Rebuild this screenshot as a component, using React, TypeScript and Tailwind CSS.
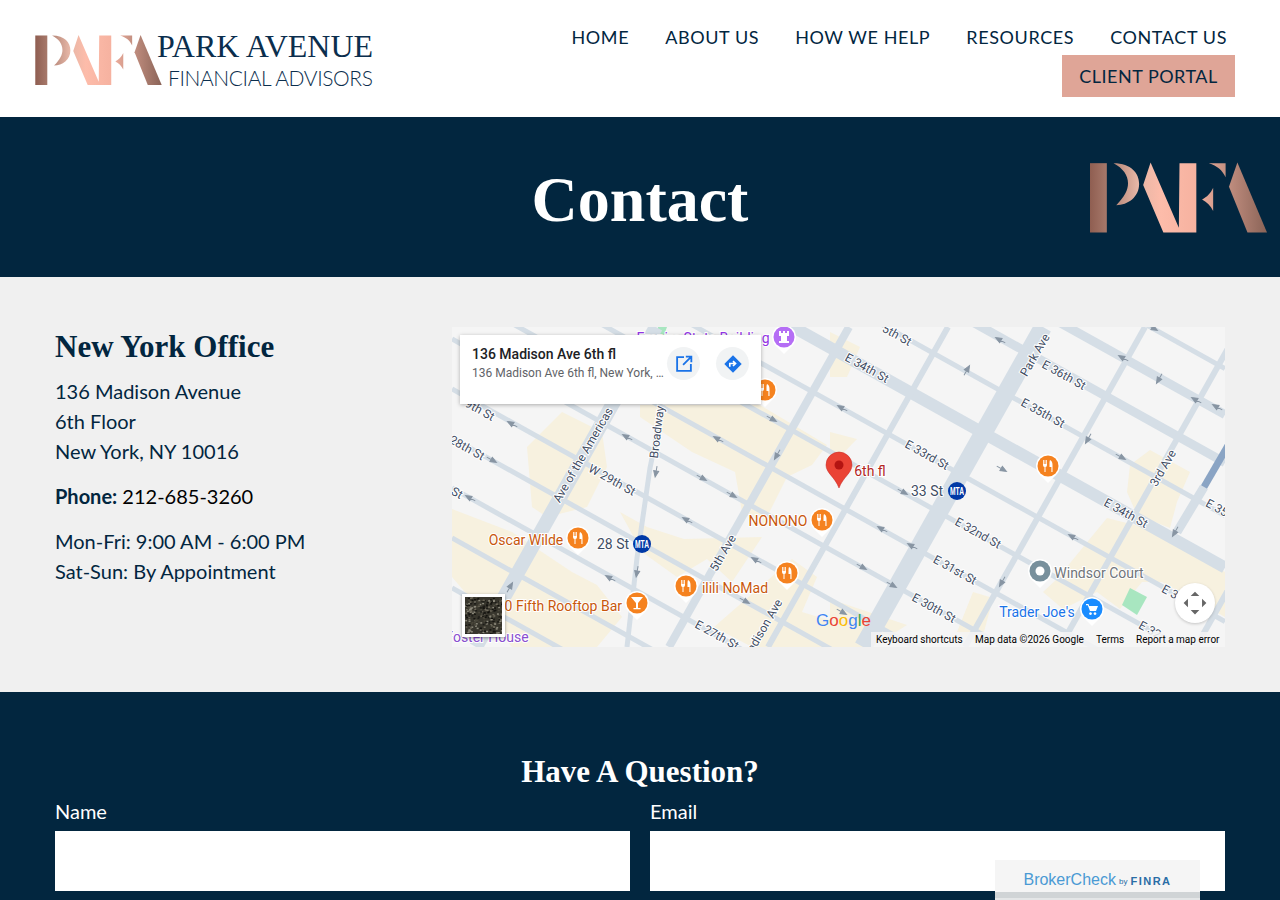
const navLinks = ["Home", "About Us", "How We Help", "Resources", "Contact Us"];

// streets: y where the line crosses x=0, and width
const streets = [
  [-389, 5], [-343, 9], [-295, 9], [-242, 5], [-190, 12], [-136, 5], [-86, 5],
  [-37, 5], [12, 5], [62, 5], [111, 5], [161, 5], [211, 5], [261, 5],
];
// avenues: x where the line crosses y=0, and width
const avenues = [[204, 14], [397, 8], [496, 6], [591, 18], [693, 6], [788, 6], [924, 6]];

const buildings = [
  "188,78 308,78 375,118 360,138 335,150 310,200 290,185 283,145 240,125 188,90",
  "75,120 110,85 150,105 155,140 135,180 95,190 80,180",
  "0,182 60,205 120,245 145,258 170,290 145,320 60,320 0,250",
  "168,185 195,200 232,212 310,210 280,255 255,232 225,250 190,225",
  "340,232 365,250 350,285 400,300 380,320 300,320 262,300",
  "378,105 405,112 378,140",
  "378,272 455,298 420,320 378,320",
  "521,265 541,271 528,320 505,305",
  "655,191 710,205 773,245 773,290 710,255 690,255 668,282 645,265 611,282 591,265 605,252",
  "678,138 698,123 738,145 725,175 718,201 685,188 675,165",
  "378,5 408,20 395,50 378,50",
];

const roadLabels: [string, number, number, number][] = [
  ["E 34th St", 415, 41, 29],
  ["E 36th St", 612, 48, 29],
  ["E 35th St", 591, 86, 29],
  ["E 33rd St", 475, 128, 29],
  ["E 32nd St", 526, 206, 29],
  ["E 31st St", 503, 243, 29],
  ["E 30th St", 482, 281, 29],
  ["E 34th St", 674, 186, 29],
  ["Park Ave", 583, 28, -60],
  ["3rd Ave", 711, 141, -60],
  ["E 35", 765, 181, 29],
  ["E 3", 718, 265, 29],
  ["E 32", 698, 303, 29],
  ["5th St", 445, 8, 29],
  ["Ave of the Americas", 131, 128, -60],
  ["Broadway", 205, 105, -83],
  ["W 29th St", 160, 153, 29],
  ["9th St", 28, 83, 29],
  ["28th St", 15, 121, 29],
  ["St", 5, 166, 29],
  ["5th Ave", 271, 226, -60],
  ["E 27th St", 265, 308, 29],
  ["Madison Ave", 310, 303, -60],
];

const arrows: [number, number, number][] = [
  [175, 110, 209], [250, 151, 29], [280, 168, 29], [235, 193, 209], [293, 274, 29], [158, 251, 209],
  [18, 171, 209], [40, 133, 29], [60, 97, 209], [204, 145, 100], [185, 245, 100], [325, 128, 120],
  [266, 112, 209], [320, 92, 29], [58, 260, 300], [304, 233, 209], [390, 81, 209], [451, 165, 29],
  [430, 202, 209], [460, 219, 209], [410, 240, 29], [440, 258, 29], [390, 285, 29], [548, 13, 209],
  [515, 43, 300], [671, 31, 209], [701, 1, 29], [744, 73, 209], [765, 80, 209], [707, 52, 120],
  [636, 112, 120], [669, 130, 29], [550, 142, 29], [621, 210, 209], [723, 205, 120], [550, 255, 120],
];

function PafaMark({ id, className }: { id: string; className: string }) {
  const fill = `url(#${id})`;
  return (
    <svg viewBox="92 68 526 208" className={className}>
      <defs>
        <linearGradient id={id} gradientUnits="userSpaceOnUse" x1="92" y1="0" x2="618" y2="0">
          <stop offset="0" stopColor="#8f5e51" />
          <stop offset="0.1" stopColor="#a87a6c" />
          <stop offset="0.27" stopColor="#e6b6a6" />
          <stop offset="0.4" stopColor="#fdbcaa" />
          <stop offset="0.6" stopColor="#f6b2a0" />
          <stop offset="0.75" stopColor="#c99485" />
          <stop offset="1" stopColor="#8a6357" />
        </linearGradient>
      </defs>
      <rect x="92" y="70" width="50" height="206" fill={fill} />
      <path d="M162 70C215 70 238 100 238 132C238 170 205 195 170 195C195 170 205 150 205 130C205 105 190 85 162 70Z" fill={fill} />
      <polygon points="272,68 250,135 310,276 408,276 408,70 358,70 356,262" fill={fill} />
      <path d="M445 70L495 70L495 112C485 90 470 78 445 70Z" fill={fill} />
      <path d="M458 143L458 212C450 196 440 186 425 178C440 170 450 160 458 143Z" fill={fill} />
      <polygon points="530,68 618,276 560,276 505,140" fill={fill} />
    </svg>
  );
}

function Poi({ x, y, color = "#f5821f", kind = "food" }: { x: number; y: number; color?: string; kind?: string }) {
  return (
    <g transform={`translate(${x} ${y})`}>
      <path d="M-8 9L0 17L8 9Z" fill="#ffffff" />
      <circle r="12" fill="#ffffff" />
      <circle r="10.5" fill={color} />
      {kind === "food" && (
        <path d="M-5 -6V-1Q-5 1 -3.5 1V6H-2.5V1Q-1 1 -1 -1V-6H-1.8V-2H-2.6V-6H-3.4V-2H-4.2V-6ZM2 -6Q4.5 -5 4.5 -1V6H3.4V1H1.5V-3Q1.5 -5 2 -6Z" fill="#ffffff" />
      )}
      {kind === "bar" && <path d="M-6 -6H6L1 0V5H3.5V6.2H-3.5V5H-1V0Z" fill="#ffffff" />}
      {kind === "place" && <circle r="4.5" fill="#ffffff" />}
      {kind === "shop" && (
        <path d="M-6 -5H-3.5L-2.8 -3H6L4 2H-2L-4.2 -3.8H-6ZM-1.5 3.2A1.4 1.4 0 1 0 -1.49 3.2ZM3 3.2A1.4 1.4 0 1 0 3.01 3.2Z" fill="#ffffff" />
      )}
      {kind === "castle" && <path d="M-5 -6H-3V-4H-1V-6H1V-4H3V-6H5V-1H3V4H5V6H-5V4H-3V-1H-5Z" fill="#ffffff" />}
    </g>
  );
}

function Mta({ x, y }: { x: number; y: number }) {
  return (
    <g>
      <circle cx={x} cy={y} r="9" fill="#0039a6" />
      <text x={x} y={y + 3.5} textAnchor="middle" fontSize="10" fontWeight="700" fill="#ffffff" className="font-['Liberation_Sans']" textLength="14" lengthAdjust="spacingAndGlyphs">
        MTA
      </text>
    </g>
  );
}

function PlaceLabel({ x, y, fill, anchor = "middle", children }: { x: number; y: number; fill: string; anchor?: "middle" | "end" | "start"; children: string }) {
  return (
    <text x={x} y={y} textAnchor={anchor} dominantBaseline="central" fontSize="14" fill={fill} stroke="#ffffff" strokeWidth="2" className="[paint-order:stroke]">
      {children}
    </text>
  );
}

function SatelliteThumb() {
  // speckle for the aerial picture
  const specks = [];
  let seed = 7;
  for (let i = 0; i < 260; i++) {
    seed = (seed * 9301 + 49297) % 233280;
    const x = (seed / 233280) * 38;
    seed = (seed * 9301 + 49297) % 233280;
    const y = (seed / 233280) * 38;
    seed = (seed * 9301 + 49297) % 233280;
    const c = ["#6f6a5c", "#1d1c18", "#8d8a7c", "#4b483c", "#14130f"][seed % 5];
    specks.push(<rect key={i} x={x} y={y} width="2" height="1.5" fill={c} />);
  }
  return (
    <svg viewBox="0 0 38 38" className="w-full h-full block">
      <rect width="38" height="38" fill="#38362d" />
      {specks}
    </svg>
  );
}

function MapPanel() {
  return (
    <div className="relative w-[773px] h-[320px] overflow-hidden bg-[#f5f5f5] font-[Roboto]">
      <svg viewBox="0 0 773 320" className="w-full h-full block">
        <rect width="773" height="320" fill="#f5f5f5" />
        {buildings.map((points) => (
          <polygon key={points} points={points} fill="#f7f1df" />
        ))}
        <polygon points="678,261 695,270 685,288 670,278" fill="#a8e6c0" />
        <polygon points="206,0 215,0 212,8 204,8" fill="#a8e6c0" />
        {streets.map(([y0, w]) => (
          <line key={y0} x1="0" y1={y0} x2="773" y2={y0 + 430.6} stroke="#d5dee6" strokeWidth={w} />
        ))}
        {avenues.map(([x0, w]) => (
          <line key={x0} x1={x0} y1="0" x2={x0 - 180} y2="320" stroke="#d5dee6" strokeWidth={w} />
        ))}
        <polyline points="211,78 198,141 185,231 175,320" fill="none" stroke="#d5dee6" strokeWidth="5" />
        <line x1="752" y1="160" x2="725" y2="205" stroke="#d5dee6" strokeWidth="9" />
        <line x1="778" y1="115" x2="752" y2="160" stroke="#8aa4c4" strokeWidth="7" />
        {arrows.map(([x, y, r]) => (
          <path key={`${x}-${y}`} d="M-6 0H2M-1 -2.5L5 0L-1 2.5Z" transform={`translate(${x} ${y}) rotate(${r})`} stroke="#8895a3" strokeWidth="1" fill="#8895a3" />
        ))}
        {roadLabels.map(([label, x, y, r]) => (
          <text key={`${label}-${x}`} x={x} y={y} transform={`rotate(${r} ${x} ${y})`} textAnchor="middle" dominantBaseline="central" fontSize="12" fill="#3f4d63" stroke="#ffffff" strokeWidth="2" className="[paint-order:stroke]">
            {label}
          </text>
        ))}
        <PlaceLabel x={251} y={11} fill="#9334e6">Empire State Building</PlaceLabel>
        <PlaceLabel x={74} y={213} fill="#c8570c">Oscar Wilde</PlaceLabel>
        <PlaceLabel x={326} y={194} fill="#c8570c">NONONO</PlaceLabel>
        <PlaceLabel x={283} y={261} fill="#c8570c">ilili NoMad</PlaceLabel>
        <PlaceLabel x={170} y={279} fill="#c8570c" anchor="end">230 Fifth Rooftop Bar</PlaceLabel>
        <PlaceLabel x={418} y={144} fill="#b3261e">6th fl</PlaceLabel>
        <PlaceLabel x={475} y={164} fill="#3f4d63">33 St</PlaceLabel>
        <PlaceLabel x={161} y={217} fill="#3f4d63">28 St</PlaceLabel>
        <PlaceLabel x={647} y={246} fill="#70757a">Windsor Court</PlaceLabel>
        <PlaceLabel x={585} y={285} fill="#1a73e8">Trader Joe's</PlaceLabel>
        <PlaceLabel x={35} y={310} fill="#8a4fd0">Foster House</PlaceLabel>
        <Poi x={126} y={211} />
        <Poi x={370} y={193} />
        <Poi x={335} y={246} />
        <Poi x={234} y={259} />
        <Poi x={185} y={276} kind="bar" />
        <Poi x={313} y={63} />
        <Poi x={596} y={139} />
        <Poi x={588} y={244} color="#78909c" kind="place" />
        <Poi x={640} y={282} color="#1a8cff" kind="shop" />
        <Poi x={332} y={10} color="#b56ef5" kind="castle" />
        <Mta x={190} y={217} />
        <Mta x={505} y={164} />
        <path d="M387 161C383 150 374 146 374 138A13 13 0 1 1 400 138C400 146 391 150 387 161Z" fill="#ea4335" stroke="#c5221f" strokeWidth="0.5" />
        <circle cx="387" cy="138" r="4.5" fill="#b31412" />
        <text x="364" y="299" fontSize="17" className="font-['Liberation_Sans']">
          <tspan fill="#4285f4">G</tspan>
          <tspan fill="#ea4335">o</tspan>
          <tspan fill="#fbbc05">o</tspan>
          <tspan fill="#4285f4">g</tspan>
          <tspan fill="#34a853">l</tspan>
          <tspan fill="#ea4335">e</tspan>
        </text>
      </svg>

      <div className="absolute left-2 top-2 w-[301px] h-[69px] bg-white shadow-[0_1px_4px_rgba(0,0,0,0.3)] flex pl-3 pr-3 pt-3">
        <div className="w-[195px] shrink-0 leading-none">
          <div className="text-[14px] font-medium text-[#202124] h-[19px]">136 Madison Ave 6th fl</div>
          <div className="text-[12px] text-[#5f6368] mt-px truncate">136 Madison Ave 6th fl, New York, NY</div>
        </div>
        <div className="flex gap-4 items-start">
          <div className="w-[33px] h-[33px] rounded-full bg-[#f1f3f4] flex items-center justify-center">
            <svg viewBox="0 0 24 24" className="w-[22px] h-[22px]" fill="none" stroke="#1a73e8" strokeWidth="2">
              <path d="M12 4.5H4.5V19.5H19.5V12M14 4H20V10M20 4L11 13" />
            </svg>
          </div>
          <div className="w-[33px] h-[33px] rounded-full bg-[#f1f3f4] flex items-center justify-center">
            <svg viewBox="0 0 24 24" className="w-[22px] h-[22px]">
              <path d="M12 2.5L21.5 12L12 21.5L2.5 12Z" fill="#1a73e8" />
              <path d="M8.5 15V11.5H14M12 8.8L14.8 11.5L12 14.2" fill="none" stroke="#ffffff" strokeWidth="1.8" />
            </svg>
          </div>
        </div>
      </div>

      <div className="absolute left-[10px] top-[267px] w-[43px] h-[43px] border-[3px] border-white shadow-[0_1px_3px_rgba(0,0,0,0.4)]">
        <SatelliteThumb />
      </div>

      <div className="absolute left-[723px] top-[256px] w-10 h-10 rounded-full bg-white shadow-[0_1px_3px_rgba(0,0,0,0.2)] flex items-center justify-center">
        <svg viewBox="0 0 24 24" className="w-[26px] h-[26px]" fill="#666666">
          <path d="M12 1.5L16 5.5H8ZM12 22.5L8 18.5H16ZM1.5 12L5.5 8V16ZM22.5 12L18.5 16V8Z" />
          <path d="M8 5.5L5.5 8M16 5.5L18.5 8M5.5 16L8 18.5M18.5 16L16 18.5" stroke="#666666" strokeWidth="0" />
        </svg>
      </div>

      <div className="absolute right-0 bottom-0 w-[354px] h-[15px] bg-[#f5f5f5]/85 flex items-center pl-[5px] text-[10px] text-black leading-none">
        <span className="w-[99px]">Keyboard shortcuts</span>
        <span className="w-[121px]">Map data ©2026 Google</span>
        <span className="w-[40px]">Terms</span>
        <span>Report a map error</span>
      </div>
    </div>
  );
}

export default function App() {
  return (
    <div className="relative h-[900px] overflow-hidden bg-white font-[Lato] text-[#02263f]">
      <header className="h-[117px] flex justify-between">
        <div className="flex items-start pl-[34px] pt-[33px]">
          <PafaMark id="logo-grad" className="w-[129px] h-[50px] mt-[2px] shrink-0" />
          <div className="ml-[-6px]">
            <div className="font-['Liberation_Serif'] text-[32px] leading-[26px] h-[30px] text-[#0b2e4d] whitespace-nowrap">PARK AVENUE</div>
            <div className="pl-[11px] mt-[6px] text-[21px] leading-[18px] font-light tracking-[-0.4px] text-[#0b2e4d] whitespace-nowrap">FINANCIAL ADVISORS</div>
          </div>
        </div>
        <nav className="flex flex-col items-end pr-[45px] pt-[25px]">
          <ul className="flex gap-9 pr-[8px] text-[18px] leading-6 uppercase tracking-[0.6px]">
            {navLinks.map((link) => (
              <li key={link}>{link}</li>
            ))}
          </ul>
          <div className="mt-[6px] w-[173px] h-[42px] bg-[#dfa597] flex items-center justify-center text-[18px] uppercase tracking-[0.5px]">
            Client Portal
          </div>
        </nav>
      </header>

      <section className="relative h-[160px] bg-[#02263f] flex items-center justify-center">
        <h1 className="font-['Liberation_Serif'] font-bold text-[64px] leading-none text-white pt-[6px]">Contact</h1>
        <PafaMark id="hero-grad" className="absolute left-[1090px] top-[45px] w-[177px] h-[71px]" />
      </section>

      <section className="h-[415px] bg-[#f0f0f0] flex pt-[50px] pl-[55px] pr-[55px]">
        <div className="w-[397px] shrink-0 text-[20px] leading-[30px]">
          <h2 className="font-['Liberation_Serif'] font-bold text-[31px] leading-[40px] mb-[9px]">New York Office</h2>
          <p>
            136 Madison Avenue
            <br />
            6th Floor
            <br />
            New York, NY 10016
          </p>
          <p className="mt-[15px]">
            <strong className="font-bold">Phone:</strong> <span className="text-black">212-685-3260</span>
          </p>
          <p className="mt-[15px]">
            Mon-Fri: 9:00 AM - 6:00 PM
            <br />
            Sat-Sun: By Appointment
          </p>
        </div>
        <MapPanel />
      </section>

      <section className="h-[208px] bg-[#02263f] px-[55px] pt-[60px] text-white">
        <h2 className="font-['Liberation_Serif'] font-bold text-[31px] leading-10 text-center">Have A Question?</h2>
        <div className="grid grid-cols-2 gap-5 mt-[4px] text-[20px]">
          <label className="block">
            <span className="block leading-[30px] mb-[5px]">Name</span>
            <input type="text" className="block w-full h-[60px] bg-white" />
          </label>
          <label className="block">
            <span className="block leading-[30px] mb-[5px]">Email</span>
            <input type="text" className="block w-full h-[60px] bg-white" />
          </label>
        </div>
      </section>

      <div className="absolute left-[995px] top-[860px] w-[205px] h-[40px] flex flex-col">
        <div className="h-[32px] bg-[#f5f5f5] flex items-center justify-center font-['Liberation_Sans'] text-[#4a9ad4] text-[16px] pt-[8px] leading-none">
          BrokerCheck<span className="text-[8px] text-[#2a6ea6] ml-[3px] mt-[4px]">by</span>
          <span className="text-[11px] font-bold tracking-[1.5px] text-[#2a6ea6] ml-[3px] mt-[2px]">FINRA</span>
        </div>
        <div className="h-[6px] bg-[#d0d4d6]" />
        <div className="h-[2px] bg-[#e4e6e7]" />
      </div>
    </div>
  );
}
